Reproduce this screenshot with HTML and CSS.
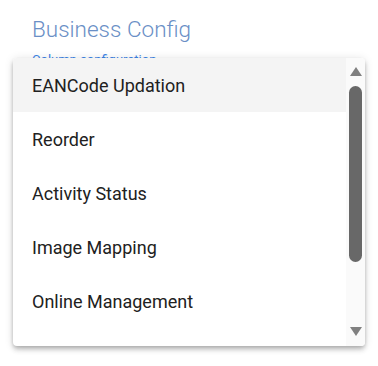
FILE: index.html
```html
<!DOCTYPE html>
<html lang="en">
<head>
	<meta charset="utf-8"/>
	<title>Business Config</title>
	<link rel="stylesheet" href="styles.css">
</head>
<body>
	<div class="page">
		<h1 class="page__title">Business Config</h1>
		<a class="page__link" href="javascript:void(0);">Column configuration</a>
	</div>

	<!--下拉菜单-->
	<div class="menu">
		<ul class="menu__list">
			<li class="menu__item menu__item_active">EANCode Updation</li>
			<li class="menu__item">Reorder</li>
			<li class="menu__item">Activity Status</li>
			<li class="menu__item">Image Mapping</li>
			<li class="menu__item">Online Management</li>
		</ul>
		<div class="menu__bar">
			<span class="menu__arrow menu__arrow_up"></span>
			<span class="menu__thumb"></span>
			<span class="menu__arrow menu__arrow_down"></span>
		</div>
	</div>
</body>
</html>
```

FILE: styles.css
```css
html,body{
	margin: 0;
	padding: 0;
	background: #fff;
	font-family: Roboto, "Noto Sans", sans-serif;
}
.page{
	padding: 15px 0 0 32px;
}
.page__title{
	margin: 0;
	font-size: 22.5px;
	line-height: 28px;
	font-weight: 300;
	color: #6a8fc6;
}
.page__link{
	display: block;
	margin-top: 9px;
	font-size: 13px;
	line-height: 16px;
	color: #3d84e6;
	text-decoration: none;
}
/*菜单*/
.menu{
	position: absolute;
	left: 13px;
	top: 58px;
	width: 352px;
	height: 288px;
	display: flex;
	background: #fff;
	border-radius: 4px;
	overflow: hidden;
	box-shadow: 0 2px 4px -1px rgba(0,0,0,0.2), 0 4px 5px 0 rgba(0,0,0,0.14), 0 1px 10px 0 rgba(0,0,0,0.12);
}
.menu__list{
	flex: 1;
	margin: 0;
	padding: 0;
	list-style: none;
	overflow: hidden;
}
.menu__item{
	height: 54px;
	display: flex;
	align-items: center;
	padding-left: 19px;
	font-size: 18px;
	color: #212121;
}
.menu__item_active{
	background: #f4f4f4;
}
.menu__bar{
	width: 19px;
	display: flex;
	flex-direction: column;
	align-items: center;
	padding: 9px 0 10px;
	box-sizing: border-box;
	background: #fafafa;
}
.menu__arrow{
	width: 0;
	height: 0;
	border-left: 6px solid transparent;
	border-right: 6px solid transparent;
}
.menu__arrow_up{
	border-bottom: 9px solid #808080;
}
.menu__arrow_down{
	margin-top: auto;
	border-top: 9px solid #808080;
}
.menu__thumb{
	margin-top: 10px;
	width: 13px;
	height: 176px;
	border-radius: 7px;
	background: #686868;
}
```
